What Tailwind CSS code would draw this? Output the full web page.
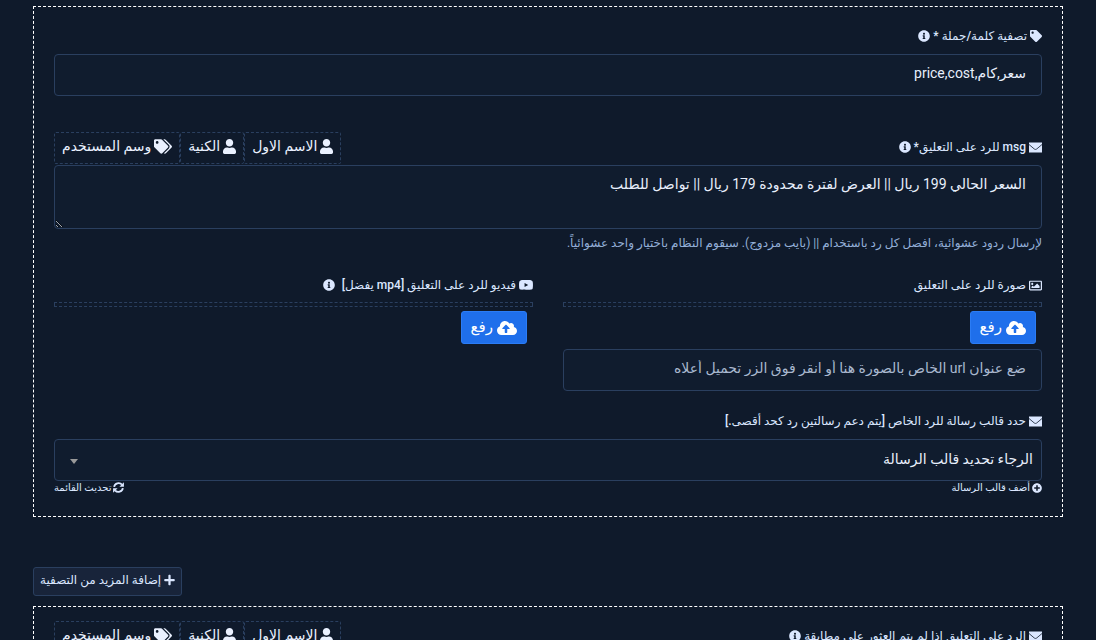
<!DOCTYPE html>
<html lang="ar" dir="rtl">
  <head>
    <meta charset="UTF-8" />
    <meta name="viewport" content="width=device-width, initial-scale=1.0" />
    <title>الرد على التعليقات</title>
    <script src="https://cdn.jsdelivr.net/npm/@tailwindcss/browser@4"></script>
  </head>
  <body
    class="h-screen overflow-hidden bg-[#0f1a2b] font-[Roboto,'DejaVu_Sans',sans-serif] text-[#dbe7ff]"
  >
    <!-- Icons -->
    <svg class="hidden">
      <symbol id="i-tag" viewBox="0 0 512 512">
        <path d="M0 252.118V48C0 21.49 21.49 0 48 0h204.118a48 48 0 0 1 33.941 14.059l211.882 211.882c18.745 18.745 18.745 49.137 0 67.882L293.823 497.941c-18.745 18.745-49.137 18.745-67.882 0L14.059 286.059A48 48 0 0 1 0 252.118zM112 64c-26.51 0-48 21.49-48 48s21.49 48 48 48 48-21.49 48-48-21.49-48-48-48z" />
      </symbol>
      <symbol id="i-tags" viewBox="0 0 640 512">
        <path d="M497.941 225.941L286.059 14.059A48 48 0 0 0 252.118 0H48C21.49 0 0 21.49 0 48v204.118a48 48 0 0 0 14.059 33.941l211.882 211.882c18.744 18.745 49.136 18.746 67.882 0l204.118-204.118c18.745-18.745 18.745-49.137 0-67.882zM112 160c-26.51 0-48-21.49-48-48s21.49-48 48-48 48 21.49 48 48-21.49 48-48 48zm513.941 133.823L421.823 497.941c-18.745 18.745-49.137 18.745-67.882 0l-.36-.36L527.64 323.522c16.999-16.999 26.36-39.6 26.36-63.64s-9.362-46.641-26.36-63.64L331.397 0h48.721a48 48 0 0 1 33.941 14.059l211.882 211.882c18.745 18.745 18.745 49.137 0 67.882z" />
      </symbol>
      <symbol id="i-user" viewBox="0 0 448 512">
        <path d="M224 256c70.7 0 128-57.3 128-128S294.7 0 224 0 96 57.3 96 128s57.3 128 128 128zm89.6 32h-16.7c-22.2 10.2-46.9 16-72.9 16s-50.6-5.8-72.9-16h-16.7C60.2 288 0 348.2 0 422.4V464c0 26.5 21.5 48 48 48h352c26.5 0 48-21.5 48-48v-41.6c0-74.2-60.2-134.4-134.4-134.4z" />
      </symbol>
      <symbol id="i-info" viewBox="0 0 512 512">
        <path d="M256 8C119.043 8 8 119.083 8 256c0 136.997 111.043 248 248 248s248-111.003 248-248C504 119.083 392.957 8 256 8zm0 110c23.196 0 42 18.804 42 42s-18.804 42-42 42-42-18.804-42-42 18.804-42 42-42zm56 254c0 6.627-5.373 12-12 12h-88c-6.627 0-12-5.373-12-12v-24c0-6.627 5.373-12 12-12h12v-64h-12c-6.627 0-12-5.373-12-12v-24c0-6.627 5.373-12 12-12h64c6.627 0 12 5.373 12 12v100h12c6.627 0 12 5.373 12 12v24z" />
      </symbol>
      <symbol id="i-mail" viewBox="0 0 13 13">
        <path d="M0 1.5h13v10H0z" />
        <path d="M0 3.5L5.3 8q1.2.9 2.4 0L13 3.5" fill="none" stroke="#0f1a2b" stroke-width=".8" />
      </symbol>
      <symbol id="i-image" viewBox="0 0 512 512">
        <path d="M464 64H48C21.49 64 0 85.49 0 112v288c0 26.51 21.49 48 48 48h416c26.51 0 48-21.49 48-48V112c0-26.51-21.49-48-48-48zm-6 336H54a6 6 0 0 1-6-6V118a6 6 0 0 1 6-6h404a6 6 0 0 1 6 6v276a6 6 0 0 1-6 6zM128 152c-22.091 0-40 17.909-40 40s17.909 40 40 40 40-17.909 40-40-17.909-40-40-40zM96 352h320v-80l-87.515-87.515c-4.686-4.686-12.284-4.686-16.971 0L192 304l-39.515-39.515c-4.686-4.686-12.284-4.686-16.971 0L96 304v48z" />
      </symbol>
      <symbol id="i-video" viewBox="14 64 548 384">
        <path d="M549.655 124.083c-6.281-23.65-24.787-42.276-48.284-48.597C458.781 64 288 64 288 64S117.22 64 74.629 75.486c-23.497 6.322-42.003 24.947-48.284 48.597-11.412 42.867-11.412 132.305-11.412 132.305s0 89.438 11.412 132.305c6.281 23.65 24.787 41.5 48.284 47.821C117.22 448 288 448 288 448s170.78 0 213.371-11.486c23.497-6.321 42.003-24.171 48.284-47.821 11.412-42.867 11.412-132.305 11.412-132.305s0-89.438-11.412-132.305zm-317.51 213.508V175.185l142.739 81.205-142.739 81.201z" />
      </symbol>
      <symbol id="i-upload" viewBox="0 0 640 512">
        <path d="M537.6 226.6c4.1-10.7 6.4-22.4 6.4-34.6 0-53-43-96-96-96-19.7 0-38.1 6-53.3 16.2C367 64.2 315.3 32 256 32c-88.4 0-160 71.6-160 160 0 2.7.1 5.4.2 8.1C40.2 219.8 0 273.2 0 336c0 79.5 64.5 144 144 144h368c70.7 0 128-57.3 128-128 0-61.9-44-113.6-102.4-125.4zM393.4 288H328v112c0 8.8-7.2 16-16 16h-48c-8.8 0-16-7.2-16-16V288h-65.4c-14.3 0-21.4-17.2-11.3-27.3l105.4-105.4c6.2-6.2 16.4-6.2 22.6 0l105.4 105.4c10.1 10.1 2.9 27.3-11.3 27.3z" />
      </symbol>
      <symbol id="i-plus-circle" viewBox="0 0 512 512">
        <path d="M256 8C119 8 8 119 8 256s111 248 248 248 248-111 248-248S393 8 256 8zm144 276c0 6.6-5.4 12-12 12h-92v92c0 6.6-5.4 12-12 12h-56c-6.6 0-12-5.4-12-12v-92h-92c-6.6 0-12-5.4-12-12v-56c0-6.6 5.4-12 12-12h92v-92c0-6.6 5.4-12 12-12h56c6.6 0 12 5.4 12 12v92h92c6.6 0 12 5.4 12 12v56z" />
      </symbol>
      <symbol id="i-plus" viewBox="0 0 448 512">
        <path d="M416 208H272V64c0-17.67-14.33-32-32-32h-32c-17.67 0-32 14.33-32 32v144H32c-17.67 0-32 14.33-32 32v32c0 17.67 14.33 32 32 32h144v144c0 17.67 14.33 32 32 32h32c17.67 0 32-14.33 32-32V304h144c17.67 0 32-14.33 32-32v-32c0-17.67-14.33-32-32-32z" />
      </symbol>
      <symbol id="i-sync" viewBox="0 0 512 512">
        <path d="M52 226A208 208 0 0 1 416 126M460 286A208 208 0 0 1 96 386" fill="none" stroke="currentColor" stroke-width="86" />
        <path d="M508 8v210H298zM4 504V294h210z" />
      </symbol>
    </svg>

    <main class="px-[33px] pt-[6px]">
      <section class="border border-dashed border-white px-5 py-5">
        <div>
          <label for="keywords" class="flex h-[18px] items-center gap-[3px] text-xs font-medium">
            <svg class="size-3 fill-current"><use href="#i-tag" /></svg>
            تصفية كلمة/جملة *
            <svg class="size-3 fill-current"><use href="#i-info" /></svg>
          </label>
          <input
            id="keywords"
            type="text"
            value="سعر,كام,price,cost"
            class="mt-[9px] block h-[42px] w-full rounded border border-[#2a3f5f] bg-[#101c2e] px-[15px] pb-1 text-sm text-[#e8effc] outline-none"
          />
        </div>

        <div class="mt-9">
          <div class="flex h-[33px] items-start justify-between">
            <label for="reply" class="flex h-[30px] items-center gap-[3px] text-xs font-medium">
              <svg class="size-[13px] fill-current"><use href="#i-mail" /></svg>
              msg للرد على التعليق*
              <svg class="size-3 fill-current"><use href="#i-info" /></svg>
            </label>
            <div class="flex text-sm font-medium text-[#eaf1ff]">
              <button type="button" class="flex h-8 items-center gap-[3px] rounded-xs border border-dashed border-[#2a3f5f] px-[7px] pb-1">
                <svg class="h-[15px] w-[13px] fill-current"><use href="#i-user" /></svg>
                الاسم الاول
              </button>
              <button type="button" class="flex h-8 items-center gap-[3px] rounded-xs border border-dashed border-[#2a3f5f] px-[7px] pb-1">
                <svg class="h-[15px] w-[13px] fill-current"><use href="#i-user" /></svg>
                الكنية
              </button>
              <button type="button" class="flex h-8 items-center gap-[3px] rounded-xs border border-dashed border-[#2a3f5f] px-[7px] pb-1">
                <svg class="h-[15px] w-[18px] fill-current"><use href="#i-tags" /></svg>
                وسم المستخدم
              </button>
            </div>
          </div>
          <textarea
            id="reply"
            class="block h-16 w-full rounded border border-[#2a3f5f] bg-[#101c2e] px-[15px] py-2 text-sm text-[#e8effc] outline-none"
          >السعر الحالي 199 ريال || العرض لفترة محدودة 179 ريال || تواصل للطلب</textarea>
          <p class="mt-1 text-xs leading-5 text-[#94afd8]">
            لإرسال ردود عشوائية، افصل كل رد باستخدام || (بايب مزدوج). سيقوم النظام باختيار واحد عشوائياً.
          </p>
        </div>

        <div class="mt-[23px] grid grid-cols-2 gap-[30px]">
          <div>
            <label for="image-url" class="flex h-[18px] items-center gap-[3px] text-xs font-medium">
              <svg class="size-[13px] fill-current"><use href="#i-image" /></svg>
              صورة للرد على التعليق
            </label>
            <div class="mt-2 h-[5px] border border-dashed border-[#2a3f5f]"></div>
            <button type="button" class="ms-1.5 mt-1 flex h-[33px] items-center gap-1 rounded-[3px] border border-[#2b7cf5] bg-[#1f6feb] px-[9px] text-[15px] font-medium text-white">
              <svg class="h-4 w-5 fill-current"><use href="#i-upload" /></svg>
              رفع
            </button>
            <input
              id="image-url"
              type="text"
              placeholder="ضع عنوان url الخاص بالصورة هنا أو انقر فوق الزر تحميل أعلاه"
              class="mt-[5px] block h-[42px] w-full rounded border border-[#2a3f5f] bg-[#101c2e] px-[15px] pb-1 text-sm outline-none placeholder:text-[#a9b8cf]"
            />
          </div>
          <div>
            <label for="video-upload" class="flex h-[18px] items-center gap-[3px] text-xs font-medium">
              <svg class="h-2.5 w-3.5 fill-current"><use href="#i-video" /></svg>
              فيديو للرد على التعليق [mp4 يفضل]
              <svg class="ms-1 size-3 fill-current"><use href="#i-info" /></svg>
            </label>
            <div class="mt-2 h-[5px] border border-dashed border-[#2a3f5f]"></div>
            <button id="video-upload" type="button" class="ms-1.5 mt-1 flex h-[33px] items-center gap-1 rounded-[3px] border border-[#2b7cf5] bg-[#1f6feb] px-[9px] text-[15px] font-medium text-white">
              <svg class="h-4 w-5 fill-current"><use href="#i-upload" /></svg>
              رفع
            </button>
          </div>
        </div>

        <div class="mt-[21px]">
          <label for="template" class="flex h-[18px] items-center gap-[3px] text-xs font-medium">
            <svg class="size-[13px] fill-current"><use href="#i-mail" /></svg>
            حدد قالب رسالة للرد الخاص [يتم دعم رسالتين رد كحد أقصى.]
          </label>
          <div class="relative mt-[9px]">
            <select id="template" class="block h-[42px] w-full appearance-none rounded border border-[#2a3f5f] bg-[#101c2e] ps-2 pe-8 pb-0.5 text-sm text-[#e8effc] outline-none">
              <option>الرجاء تحديد قالب الرسالة</option>
            </select>
            <span class="pointer-events-none absolute end-4 top-5 border-x-4 border-t-5 border-x-transparent border-t-[#999]"></span>
          </div>
          <div class="flex h-[15px] justify-between text-[10px] leading-[13px] font-medium">
            <a href="#" class="flex h-[13px] items-center gap-0.5">
              <svg class="size-2.5 fill-current"><use href="#i-plus-circle" /></svg>
              أضف قالب الرسالة
            </a>
            <a href="#" class="flex h-[13px] items-center gap-0.5">
              <svg class="size-[11px] fill-current"><use href="#i-sync" /></svg>
              تحديث القائمة
            </a>
          </div>
        </div>
      </section>

      <div class="mt-[50px] flex justify-end">
        <button type="button" class="flex h-[29px] items-center gap-[3px] rounded-[3px] border border-[#2a3f5f] bg-[#18243a] px-1.5 pb-1 text-xs font-medium">
          <svg class="h-3 w-[11px] fill-current"><use href="#i-plus" /></svg>
          إضافة المزيد من التصفية
        </button>
      </div>

      <section class="mt-[10px] border border-dashed border-white px-5 pt-3.5 pb-5">
        <div class="flex h-[33px] items-start justify-between">
          <label for="fallback" class="flex h-[30px] items-center gap-[3px] text-xs font-medium">
            <svg class="size-[13px] fill-current"><use href="#i-mail" /></svg>
            الرد على التعليق إذا لم يتم العثور على مطابقة
            <svg class="size-3 fill-current"><use href="#i-info" /></svg>
          </label>
          <div class="flex text-sm font-medium text-[#eaf1ff]">
            <button type="button" class="flex h-8 items-center gap-[3px] rounded-xs border border-dashed border-[#2a3f5f] px-[7px] pb-1">
              <svg class="h-[15px] w-[13px] fill-current"><use href="#i-user" /></svg>
              الاسم الاول
            </button>
            <button type="button" class="flex h-8 items-center gap-[3px] rounded-xs border border-dashed border-[#2a3f5f] px-[7px] pb-1">
              <svg class="h-[15px] w-[13px] fill-current"><use href="#i-user" /></svg>
              الكنية
            </button>
            <button type="button" class="flex h-8 items-center gap-[3px] rounded-xs border border-dashed border-[#2a3f5f] px-[7px] pb-1">
              <svg class="h-[15px] w-[18px] fill-current"><use href="#i-tags" /></svg>
              وسم المستخدم
            </button>
          </div>
        </div>
        <textarea
          id="fallback"
          class="block h-16 w-full rounded border border-[#2a3f5f] bg-[#101c2e] px-[15px] py-2 text-sm text-[#e8effc] outline-none"
        ></textarea>
      </section>
    </main>
  </body>
</html>
